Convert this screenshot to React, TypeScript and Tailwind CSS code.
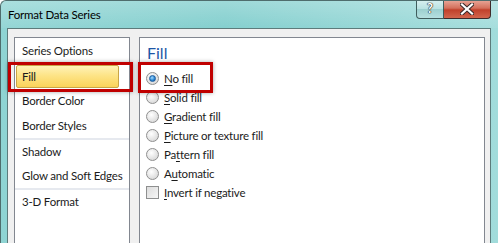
const leftItems = [
  { label: 'Series Options', h: 'h-[25px]' },
  { label: 'Fill', h: 'h-[25px]', active: true },
  { label: 'Border Color', h: 'h-[26px]' },
  { label: 'Border Styles', h: 'h-[24px]', sepAfter: true },
  { label: 'Shadow', h: 'h-[24px]' },
  { label: 'Glow and Soft Edges', h: 'h-[24px]', sepAfter: true },
  { label: '3-D Format', h: 'h-[24px]' },
];

const fillOptions = [
  { pre: '', key: 'N', post: 'o fill', checked: true },
  { pre: '', key: 'S', post: 'olid fill' },
  { pre: '', key: 'G', post: 'radient fill' },
  { pre: '', key: 'P', post: 'icture or texture fill' },
  { pre: 'Pa', key: 't', post: 'tern fill' },
  { pre: 'A', key: 'u', post: 'tomatic' },
];

function Radio({ checked }: { checked?: boolean }) {
  return (
    <span className="w-[13px] h-[13px] rounded-full border border-[#8f8f8f] bg-[radial-gradient(circle_at_40%_35%,#ffffff,#e2e2e2_60%,#cfcfcf)] flex items-center justify-center shrink-0">
      {checked && (
        <span className="w-[7px] h-[7px] rounded-full bg-[radial-gradient(circle_at_40%_35%,#a6dcff,#2f8ad6_55%,#0e4f94)] border border-[#1b5c9e]" />
      )}
    </span>
  );
}

function Ul({ children }: { children: string }) {
  return <span className="underline underline-offset-[2px] decoration-[1px]">{children}</span>;
}

export default function App() {
  return (
    <div className="relative w-[498px] h-[243px] overflow-hidden flex flex-col bg-[linear-gradient(90deg,#8fd4d3,#7ecdcc_45%,#a2dcdb)] border-l border-t border-[#4f6d6d] rounded-tl-[6px] font-['Lato',sans-serif] text-[11.5px] tracking-[-0.2px] text-[#1b1b1b] whitespace-nowrap">
      {/* title bar */}
      <div className="h-[27px] flex justify-between pl-[7px] pr-[7px] bg-[linear-gradient(180deg,rgba(255,255,255,0.25),rgba(255,255,255,0.05))]">
        <div className="h-[28px] flex items-center text-black">Format Data Series</div>
        <div className="flex h-[19px] -mt-px">
          <div className="w-[28px] h-full rounded-bl-[4px] border border-t-0 border-[#3f5d5d] bg-[linear-gradient(180deg,#d9f0f0,#b9e2e2_50%,#9ccfcf_51%,#b6e0e0)] flex items-center justify-center text-white font-bold text-[13px] [text-shadow:0_0_1px_#222,0_0_1px_#222,0_0_1px_#222]">
            ?
          </div>
          <div className="w-[47px] h-full rounded-br-[4px] border border-l-0 border-t-0 border-[#3f2a2a] bg-[linear-gradient(180deg,#e9a99b,#d4705c_45%,#c1412b_55%,#d2654d)] flex items-center justify-center">
            <svg width="14" height="12" viewBox="0 0 14 12">
              <path d="M2 1.5 L12 10.5 M12 1.5 L2 10.5" stroke="#3a2a2a" strokeWidth="4.2" strokeLinecap="square" />
              <path d="M2 1.5 L12 10.5 M12 1.5 L2 10.5" stroke="#ffffff" strokeWidth="2.2" strokeLinecap="square" />
            </svg>
          </div>
        </div>
      </div>

      {/* body */}
      <div className="flex-1 flex pl-[6px] pr-[7px] min-h-0">
        <div className="flex-1 flex bg-[#f0f0f0] border-l border-r border-t border-[#5d7b7b] pt-[8px] pl-[6px] pr-[5px] gap-[9px]">
          {/* left nav */}
          <div className="w-[116px] bg-white border-l border-r border-t border-[#828790]">
            {leftItems.map((it) => (
              <div key={it.label}>
                {it.active ? (
                  <div className={`${it.h} pt-[2px]`}>
                    <div className="ml-[1px] w-[103px] h-[23px] rounded-[2px] border border-[#c9a546] bg-[linear-gradient(180deg,#fff2b8,#fde487_45%,#fbd35a)] flex items-center pl-[5px]">
                      {it.label}
                    </div>
                  </div>
                ) : (
                  <div className={`${it.h} flex items-center pl-[7px]`}>{it.label}</div>
                )}
                {it.sepAfter && <div className="h-[2px] bg-[#e6e9ef]" />}
              </div>
            ))}
          </div>

          {/* right content */}
          <div className="flex-1 bg-white border-l border-r border-t border-[#828790] pl-[6px]">
            <div className="mt-[5px] h-[20px] ml-[1px] text-[16px] leading-[20px] tracking-normal text-[#1d56a6]">Fill</div>
            <div className="mt-[6px]">
              {fillOptions.map((o) => (
                <div key={o.key + o.post} className="h-[19px] flex items-center gap-[5px]">
                  <Radio checked={o.checked} />
                  <span>
                    {o.pre}
                    <Ul>{o.key}</Ul>
                    {o.post}
                  </span>
                </div>
              ))}
              <div className="h-[19px] flex items-center gap-[5px]">
                <span className="w-[13px] h-[13px] border border-[#8e8f8f] bg-[linear-gradient(135deg,#dcdcdc,#f6f6f6)] shrink-0" />
                <span>
                  <Ul>I</Ul>nvert if negative
                </span>
              </div>
            </div>
          </div>
        </div>
      </div>

      {/* red annotation boxes */}
      <div className="absolute left-[7px] top-[61px] w-[125px] h-[30px] border-[3px] border-[#c00000] shadow-[0_0_4px_rgba(0,0,0,0.35)]" />
      <div className="absolute left-[137px] top-[61px] w-[75px] h-[31px] border-[3px] border-[#c00000] shadow-[0_0_4px_rgba(0,0,0,0.35)]" />
    </div>
  );
}
